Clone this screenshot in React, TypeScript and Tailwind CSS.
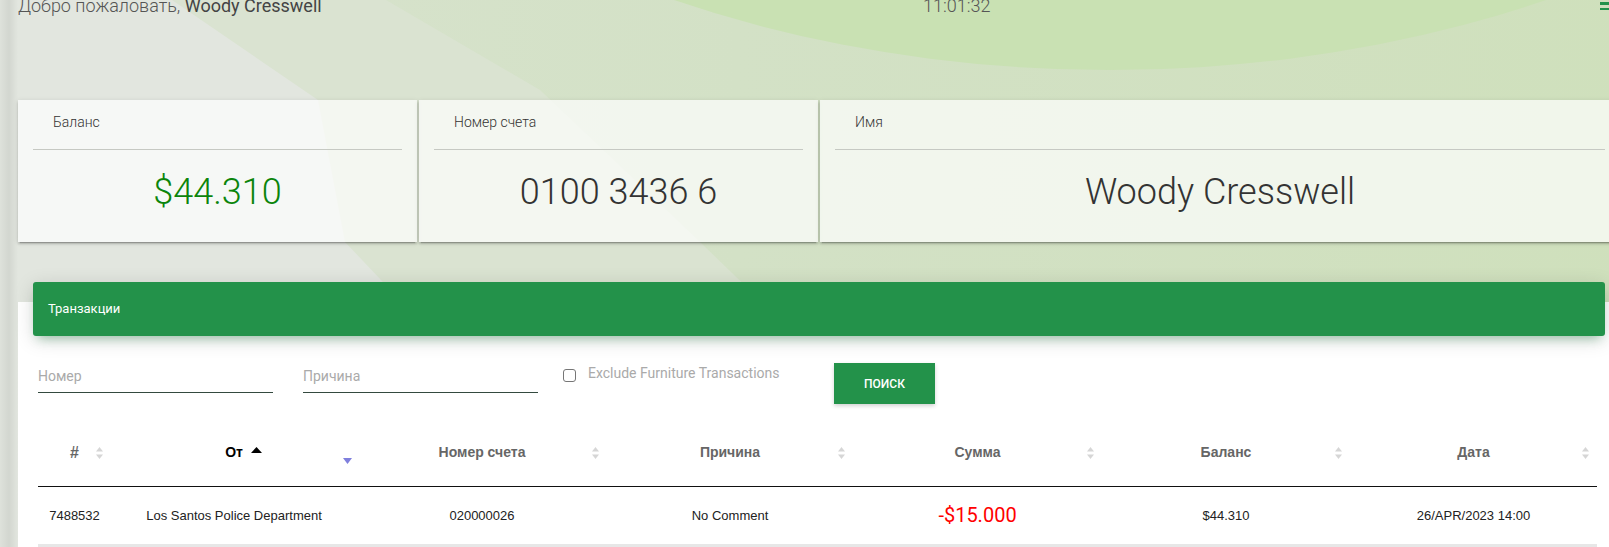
import React from "react";

const GREEN = "#23924a";

function Backdrop() {
  return (
    <svg
      className="absolute left-0 top-0 h-[547px] w-[1638px]"
      viewBox="0 0 1638 547"
      preserveAspectRatio="none"
      aria-hidden="true"
    >
      <defs>
        <linearGradient id="base" x1="0" y1="0" x2="1" y2="0">
          <stop offset="0" stopColor="#d9e3cf" />
          <stop offset="0.45" stopColor="#d3e1c6" />
          <stop offset="1" stopColor="#cfe0bc" />
        </linearGradient>
        <linearGradient id="edge" x1="0" y1="0" x2="1" y2="0">
          <stop offset="0" stopColor="#000" stopOpacity="0.02" />
          <stop offset="0.5" stopColor="#000" stopOpacity="0.07" />
          <stop offset="1" stopColor="#000" stopOpacity="0" />
        </linearGradient>
      </defs>
      <rect width="1638" height="547" fill="url(#base)" />
      <polygon points="172,0 386,0 540,90 700,242 760,300 900,547 400,547" fill="#dae3d1" />
      <polygon points="0,0 172,0 318,100 345,242 400,300 300,547 0,547" fill="#e2e6df" />
      <ellipse cx="1110" cy="-520" rx="923" ry="590" fill="#c9e1b3" />
      <rect width="18" height="547" fill="url(#edge)" />
    </svg>
  );
}

function StatCard({
  title,
  value,
  valueClass,
  className,
}: {
  title: string;
  value: string;
  valueClass: string;
  className: string;
}) {
  return (
    <div
      className={`h-[142px] bg-white/70 px-[15px] shadow-[0_2px_2px_0_rgba(0,0,0,0.14),0_3px_1px_-2px_rgba(0,0,0,0.2),0_1px_5px_0_rgba(0,0,0,0.12)] ${className}`}
    >
      <div className="border-b border-[#c6c9c3] pb-[19px] pl-[20px] pt-[14px] text-[14px] font-light leading-[16px] text-[#333]">
        {title}
      </div>
      <div className={`mt-[20px] text-center text-[36px] font-light leading-[44px] ${valueClass}`}>
        {value}
      </div>
    </div>
  );
}

function SortIcon() {
  return (
    <svg
      width="7"
      height="13"
      viewBox="0 0 7 13"
      className="absolute right-[8px] top-1/2 -translate-y-1/2"
    >
      <path d="M3.5 0.5 L7 5 L0 5 Z" fill="#d6d6d6" />
      <path d="M0 8 L7 8 L3.5 12.5 Z" fill="#d6d6d6" />
    </svg>
  );
}

const columns = [
  { label: "#", width: "w-[73px]" },
  { label: "От", width: "w-[246px]" },
  { label: "Номер счета", width: "w-[250px]" },
  { label: "Причина", width: "w-[246px]" },
  { label: "Сумма", width: "w-[249px]" },
  { label: "Баланс", width: "w-[248px]" },
  { label: "Дата", width: "w-[247px]" },
];

export default function App() {
  return (
    <div className="h-screen w-screen overflow-hidden bg-[#e2e6df] font-['Roboto',sans-serif]">
      <div className="relative min-h-[547px] w-[1638px]">
        <Backdrop />
        <div className="relative flex flex-col px-[18px]">
          {/* top bar */}
          <header className="-mt-[6px] flex h-[24px] items-start justify-between text-[18px] leading-[24px] text-[#555]">
            <div className="font-light">
              Добро пожаловать, <span className="font-normal text-[#444]">Woody Cresswell</span>
            </div>
            <div className="mr-[8px] font-light">11:01:32</div>
            <div className="mt-[2.5px] flex w-[20px] flex-col gap-[3px]">
              <span className="h-[2.5px] bg-[#23924a]" />
              <span className="h-[2.5px] bg-[#23924a]" />
              <span className="h-[2.5px] bg-[#23924a]" />
            </div>
          </header>

          {/* summary cards */}
          <div className="mt-[82px] grid grid-cols-4 gap-[2px]">
            <StatCard title="Баланс" value="$44.310" valueClass="text-[#0b850b]" className="" />
            <StatCard title="Номер счета" value="0100 3436 6" valueClass="text-[#333]" className="" />
            <StatCard title="Имя" value="Woody Cresswell" valueClass="text-[#333]" className="col-span-2" />
          </div>

          {/* transactions panel */}
          <section className="mt-[60px] flex min-h-[300px] flex-col bg-white px-[20px]">
            <div className="-mx-[5px] -mt-[20px] flex h-[54px] items-center rounded-[3px] bg-[#23924a] pl-[15px] text-[13px] text-white shadow-[0_4px_20px_0_rgba(0,0,0,0.14),0_7px_10px_-5px_rgba(35,146,74,0.4)]">
              Транзакции
            </div>

            <div className="mt-[24px] flex items-start">
              <input
                placeholder="Номер"
                className="h-[33px] w-[235px] border-b border-[#344a3f] bg-transparent text-[14px] text-[#333] outline-none placeholder:text-[#aaa]"
              />
              <input
                placeholder="Причина"
                className="ml-[30px] h-[33px] w-[235px] border-b border-[#344a3f] bg-transparent text-[14px] text-[#333] outline-none placeholder:text-[#aaa]"
              />
              <label className="ml-[25px] flex w-[271px] items-start">
                <span className="mt-[9px] h-[13px] w-[13px] rounded-[3px] border border-[#767676] bg-white" />
                <span className="ml-[12px] mt-[5px] text-[14px] leading-[16px] text-[#aaa]">
                  Exclude Furniture Transactions
                </span>
              </label>
              <button
                className="mt-[3px] h-[41px] w-[101px] bg-[#23924a] text-[12px] font-medium uppercase text-white shadow-[0_2px_4px_0_rgba(0,0,0,0.18)]"
                style={{ backgroundColor: GREEN }}
              >
                Поиск
              </button>
            </div>

            <table className="mt-[16px] w-[1559px] table-fixed border-collapse font-['Liberation_Sans',Arial,sans-serif]">
              <colgroup>
                {columns.map((c) => (
                  <col key={c.label} className={c.width} />
                ))}
              </colgroup>
              <thead>
                <tr>
                  {columns.map((c, i) => (
                    <th
                      key={c.label}
                      className={`relative h-[66px] border-b border-[#111] p-0 text-center font-bold ${
                        i === 0 ? "text-[16px]" : "text-[14px]"
                      } ${i === 1 ? "text-black" : "text-[#666]"}`}
                    >
                      {i === 1 ? (
                        <>
                          <span className="relative">
                            {c.label}
                            <svg
                              width="11"
                              height="6"
                              viewBox="0 0 11 6"
                              className="absolute left-full top-[3px] ml-[8px]"
                            >
                              <path d="M5.5 0 L11 6 L0 6 Z" fill="#000" />
                            </svg>
                          </span>
                          <svg
                            width="9"
                            height="6"
                            viewBox="0 0 9 6"
                            className="absolute right-[5px] top-[38px]"
                          >
                            <path d="M0 0 L9 0 L4.5 6 Z" fill="#7f7fdd" />
                          </svg>
                        </>
                      ) : (
                        <>
                          {c.label}
                          <SortIcon />
                        </>
                      )}
                    </th>
                  ))}
                </tr>
              </thead>
              <tbody>
                <tr className="text-center text-[13px] text-[#222]">
                  <td className="h-[58px] p-0">7488532</td>
                  <td className="p-0">Los Santos Police Department</td>
                  <td className="p-0">020000026</td>
                  <td className="p-0">No Comment</td>
                  <td className="p-0 font-['Roboto',sans-serif] text-[20px] text-[#ff0000]">-$15.000</td>
                  <td className="p-0">$44.310</td>
                  <td className="p-0">26/APR/2023 14:00</td>
                </tr>
              </tbody>
            </table>
            <div className="h-[12px] w-[1559px] bg-[#e7e7e7]" />
          </section>
        </div>
      </div>
    </div>
  );
}
